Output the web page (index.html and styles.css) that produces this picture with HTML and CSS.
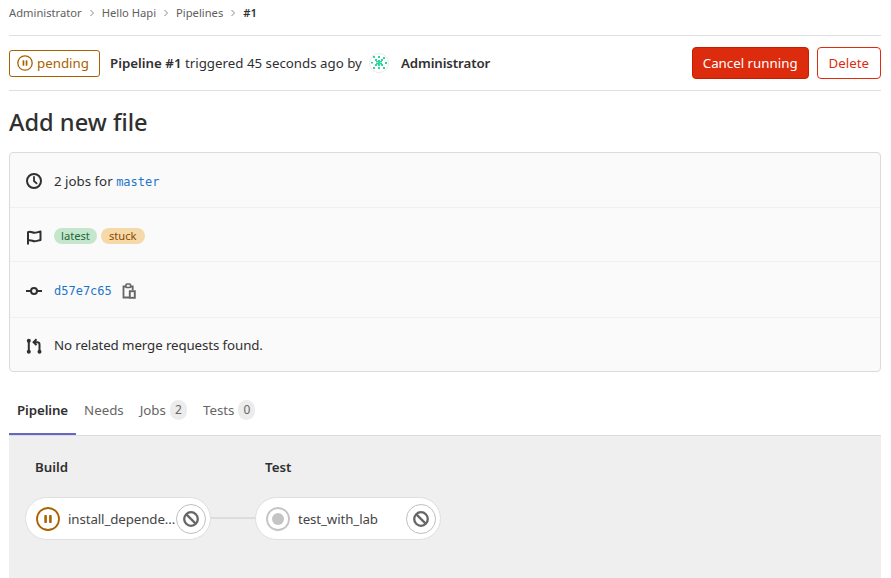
FILE: index.html
```html
<!DOCTYPE html>
<html lang="en">
<head>
<meta charset="utf-8">
<title>Pipeline #1</title>
<link rel="stylesheet" href="styles.css">
</head>
<body>
<nav class="crumbs">
  <a>Administrator</a>
  <svg class="chev" viewBox="0 0 8 8"><path d="M2.5 1 5.5 4 2.5 7"/></svg>
  <a>Hello Hapi</a>
  <svg class="chev" viewBox="0 0 8 8"><path d="M2.5 1 5.5 4 2.5 7"/></svg>
  <a>Pipelines</a>
  <svg class="chev" viewBox="0 0 8 8"><path d="M2.5 1 5.5 4 2.5 7"/></svg>
  <b>#1</b>
</nav>
<header class="head">
  <span class="status">
    <svg width="16" height="16" viewBox="0 0 16 16"><circle cx="8" cy="8" r="7.2" fill="none" stroke="#ab6100" stroke-width="1.3"/><rect x="5.6" y="5.2" width="1.7" height="5.6" rx=".6" fill="#ab6100"/><rect x="8.7" y="5.2" width="1.7" height="5.6" rx=".6" fill="#ab6100"/></svg>
    pending
  </span>
  <span class="info"><b>Pipeline #1</b> triggered 45 seconds ago by</span>
  <svg class="avatar" width="20" height="20" viewBox="0 0 20 20">
    <circle cx="10" cy="10" r="9.5" fill="#fff" stroke="#e8e8e8"/>
    <g fill="#2fd6a0">
      <rect x="6" y="6" width="2" height="2"/><rect x="12" y="6" width="2" height="2"/><rect x="6" y="11" width="2" height="2"/><rect x="12" y="11" width="2" height="2"/>
      <rect x="7" y="8" width="6" height="1.5"/><rect x="7" y="10" width="6" height="1.5"/><rect x="9" y="7" width="2" height="6"/>
      <rect x="4" y="3" width="2" height="2"/><rect x="14" y="4" width="2" height="2"/><rect x="9" y="14" width="2" height="2"/><rect x="9" y="3" width="2" height="2"/>
      <rect x="2" y="9" width="2" height="1.5"/><rect x="16" y="9" width="2" height="2"/><rect x="4" y="14" width="2" height="2"/><rect x="14" y="14" width="2" height="2"/>
    </g>
  </svg>
  <span class="author">Administrator</span>
  <span class="actions">
    <button class="btn danger">Cancel running</button>
    <button class="btn outline">Delete</button>
  </span>
</header>
<h1 class="title">Add new file</h1>
<section class="card">
  <div class="row r1">
    <svg class="ico" width="16" height="16" viewBox="0 0 16 16"><circle cx="8" cy="8" r="7" fill="none" stroke="#303030" stroke-width="2"/><path d="M8 3.8V8l2.6 2.4" fill="none" stroke="#303030" stroke-width="1.8" stroke-linecap="round"/></svg>
    <span>2 jobs for <code class="link">master</code></span>
  </div>
  <div class="row r2">
    <svg class="ico flag" width="16" height="16" viewBox="0 0 16 16"><path d="M2 15.500V3.200C5 2 6 3.800 8.500 3.800 10.500 3.800 12 3 14.500 2.500v8.500c-2.500.5-4 1.300-6 1.300S5 10.500 2 11.500" fill="none" stroke="#303030" stroke-width="2" stroke-linejoin="round"/></svg>
    <span class="pill green">latest</span>
    <span class="pill orange">stuck</span>
  </div>
  <div class="row r3">
    <svg class="ico" width="16" height="16" viewBox="0 0 16 16"><circle cx="8" cy="8" r="3" fill="none" stroke="#303030" stroke-width="2"/><path d="M.5 8h4.500M11 8h4.500" stroke="#303030" stroke-width="2" stroke-linecap="round"/></svg>
    <code class="link">d57e7c65</code>
    <svg class="copy" width="14" height="16" viewBox="0 0 14 16"><path d="M7 14.500H1.500V3.500H4M8.500 3.500h2.200V7" fill="none" stroke="#666" stroke-width="1.800"/><rect x="4" y="1" width="4.500" height="3.500" rx=".8" fill="none" stroke="#666" stroke-width="1.600"/><rect x="7.800" y="8.200" width="5" height="6.600" fill="none" stroke="#666" stroke-width="1.900"/></svg>
  </div>
  <div class="row r4">
    <svg class="ico merge" width="16" height="16" viewBox="0 0 16 16"><g fill="#303030"><circle cx="2.800" cy="2.800" r="2"/><circle cx="2.800" cy="13.800" r="2"/><circle cx="13.500" cy="13.800" r="2"/></g><path d="M2.800 3v10M13.500 13V6.500c0-1.500-.8-2.300-2.300-2.300H8.500M10.500 1.300 7.600 4.200l2.900 2.900" fill="none" stroke="#303030" stroke-width="2"/></svg>
    <span class="tight">No related merge requests found.</span>
  </div>
</section>
<ul class="tabs">
  <li class="tab active">Pipeline</li>
  <li class="tab">Needs</li>
  <li class="tab">Jobs <span class="count">2</span></li>
  <li class="tab">Tests <span class="count">0</span></li>
</ul>
<main class="graph">
  <div class="stage">
    <h2 class="stage-name">Build</h2>
    <div class="job">
      <svg class="job-status" width="24" height="24" viewBox="0 0 24 24"><circle cx="12" cy="12" r="11" fill="#fff" stroke="#ab6100" stroke-width="1.800"/><rect x="8.300" y="8" width="2.600" height="8" rx=".8" fill="#ab6100"/><rect x="13.100" y="8" width="2.600" height="8" rx=".8" fill="#ab6100"/></svg>
      <span class="job-name">install_depende...</span>
      <span class="cancel"><svg width="16" height="16" viewBox="0 0 16 16"><circle cx="8" cy="8" r="6.800" fill="none" stroke="#666" stroke-width="2.300"/><path d="M3.400 3.400l9.200 9.200" stroke="#666" stroke-width="2.300"/></svg></span>
    </div>
  </div>
  <div class="link-line"></div>
  <div class="stage">
    <h2 class="stage-name">Test</h2>
    <div class="job">
      <svg class="job-status" width="24" height="24" viewBox="0 0 24 24"><circle cx="12" cy="12" r="11" fill="#fff" stroke="#c4c4c4" stroke-width="1.800"/><circle cx="12" cy="12" r="6" fill="#c4c4c4"/></svg>
      <span class="job-name">test_with_lab</span>
      <span class="cancel"><svg width="16" height="16" viewBox="0 0 16 16"><circle cx="8" cy="8" r="6.800" fill="none" stroke="#666" stroke-width="2.300"/><path d="M3.400 3.400l9.200 9.200" stroke="#666" stroke-width="2.300"/></svg></span>
    </div>
  </div>
</main>
</body>
</html>
```
FILE: styles.css
```css
* { box-sizing: border-box; }
html, body { height: 100%; }
body {
  margin: 0;
  padding: 0 10px 0 9px;
  font-family: "Noto Sans", "Open Sans", sans-serif;
  font-size: 13.3px;
  color: #303030;
  background: #fff;
  overflow: hidden;
  display: flex;
  flex-direction: column;
}
.crumbs {
  display: flex;
  align-items: center;
  height: 35px;
  padding-bottom: 10px;
  font-size: 11.2px;
  color: #5e5e5e;
}
.crumbs b { font-weight: 600; color: #303030; }
.chev { width: 8px; height: 8px; margin: 0 6px; fill: none; stroke: #8a8a8a; stroke-width: 1; }
.head {
  display: flex;
  align-items: center;
  height: 56px;
  border-top: 1px solid #dfdfdf;
  border-bottom: 1px solid #dfdfdf;
}
.status {
  display: flex;
  align-items: center;
  gap: 4px;
  width: 91px;
  height: 27px;
  padding-left: 7px;
  border: 1px solid #ab6100;
  border-radius: 3px;
  color: #ab6100;
}
.info { margin-left: 10px; }
.info b, .author { font-weight: 600; }
.avatar { margin-left: 7px; }
.author { margin-left: 12px; letter-spacing: -.1px; }
.actions { margin-left: auto; display: flex; gap: 8px; }
.btn {
  height: 32px;
  border-radius: 4px;
  font: inherit;
}
.danger { background: #dd2b0e; border: 1px solid #c91c00; color: #fff; padding: 0 10px; }
.outline { background: #fff; border: 1px solid #dd2b0e; color: #dd2b0e; padding: 0 11px; }
.title {
  margin: 0;
  height: 61px;
  line-height: 63px;
  font-size: 23.6px;
  font-weight: 500;
}
.card {
  height: 220px;
  background: #fafafa;
  border: 1px solid #dbdbdb;
  border-radius: 4px;
  display: flex;
  flex-direction: column;
}
.row {
  display: flex;
  align-items: center;
  padding: 2px 0 0 16px;
  border-bottom: 1px solid #f0f0f0;
}
.r1 { height: 55px; }
.r2 { height: 54px; }
.r3 { height: 56px; }
.r4 { flex: 1; border-bottom: 0; padding-top: 0; }
.ico { margin-right: 12px; flex: none; }
.flag { margin-top: 2px; }
.merge { margin-top: 3px; }
.tight { letter-spacing: -.1px; }
code { font-family: "DejaVu Sans Mono", monospace; font-size: 12px; }
.link { color: #1f75cb; }
.pill {
  height: 16px;
  line-height: 16px;
  border-radius: 8px;
  font-size: 11.2px;
  margin-right: 4px;
}
.green { background: #c3e6cd; color: #24663b; padding: 0 7px; }
.orange { background: #f5d9a8; color: #8f4700; padding: 0 8px; }
.copy { margin-left: 10px; }
.tabs {
  list-style: none;
  margin: 23px 0 0;
  padding: 0;
  height: 40px;
  display: flex;
}
.tab {
  display: flex;
  align-items: center;
  gap: 4px;
  height: 40px;
  padding: 0 8px 10px;
  color: #666;
}
.active {
  color: #303030;
  font-weight: 600;
  letter-spacing: -.1px;
  border-bottom: 2px solid #6666c4;
  padding-bottom: 8px;
}
.count {
  display: inline-block;
  height: 20px;
  line-height: 20px;
  min-width: 17px;
  text-align: center;
  border-radius: 10px;
  background: #ececec;
  font-size: 12px;
}
.graph {
  flex: 1;
  background: #efefef;
  border-top: 1px solid #dbdbdb;
  padding: 20px 0 0 16px;
  display: flex;
  align-items: flex-start;
}
.stage { width: 186px; }
.stage-name {
  margin: 0 0 18px 10px;
  height: 23px;
  line-height: 23px;
  font-size: 13.3px;
  font-weight: 600;
}
.job {
  display: flex;
  align-items: center;
  height: 43px;
  padding: 0 4px 0 10px;
  background: #fff;
  border: 1px solid #dfdfdf;
  border-radius: 22px;
}
.job-status { flex: none; margin-right: 8px; }
.job-name { flex: 1; min-width: 0; white-space: nowrap; color: #444; letter-spacing: -.1px; }
.cancel {
  flex: none;
  display: flex;
  align-items: center;
  justify-content: center;
  width: 30px;
  height: 30px;
  border: 1px solid #bfbfbf;
  border-radius: 50%;
  background: #fff;
}
.link-line {
  width: 44px;
  height: 2px;
  margin-top: 61px;
  background: #dcdcdc;
}
```
